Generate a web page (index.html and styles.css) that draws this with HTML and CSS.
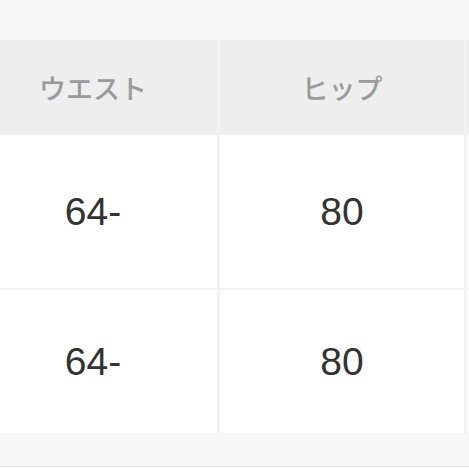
FILE: index.html
```html
<!DOCTYPE html>
<html lang="ja">
<head>
<meta charset="utf-8">
<title>サイズ表</title>
<link rel="stylesheet" href="styles.css">
</head>
<body>
<div class="page">
  <div class="grid head">
    <div class="cell th">ウエスト</div>
    <div class="cell th">ヒップ</div>
    <div class="cell th"></div>
  </div>
  <div class="grid body">
    <div class="cell td r1">64-</div>
    <div class="cell td r1">80</div>
    <div class="cell td r1"></div>
    <div class="cell td r2">64-</div>
    <div class="cell td r2">80</div>
    <div class="cell td r2"></div>
  </div>
  <div class="foot"></div>
</div>
</body>
</html>
```
FILE: styles.css
```css
html, body {
  margin: 0;
  padding: 0;
  background: #ffffff;
}
.page {
  padding-top: 40px;
  background: #f7f7f7;
  overflow: hidden;
}
.grid {
  display: grid;
  grid-template-columns: 248px 244px 1fr;
  column-gap: 3px;
  margin-left: -31px;
  background: #f2f2f2;
}
.body {
  row-gap: 2px;
}
.cell {
  display: flex;
  align-items: center;
  justify-content: center;
}
.th {
  height: 95px;
  background: #eeeeee;
  color: #9a9a9a;
  font-family: "Noto Sans CJK JP", sans-serif;
  font-weight: 500;
  font-size: 27px;
}
.td {
  background: #ffffff;
  color: #333333;
  font-family: "Liberation Sans", Arial, sans-serif;
  font-size: 39px;
}
.r1 { height: 153px; }
.r2 { height: 143px; }
.foot {
  height: 33px;
  background: #f7f7f7;
  border-bottom: 1px solid #e4e4e4;
}
```
